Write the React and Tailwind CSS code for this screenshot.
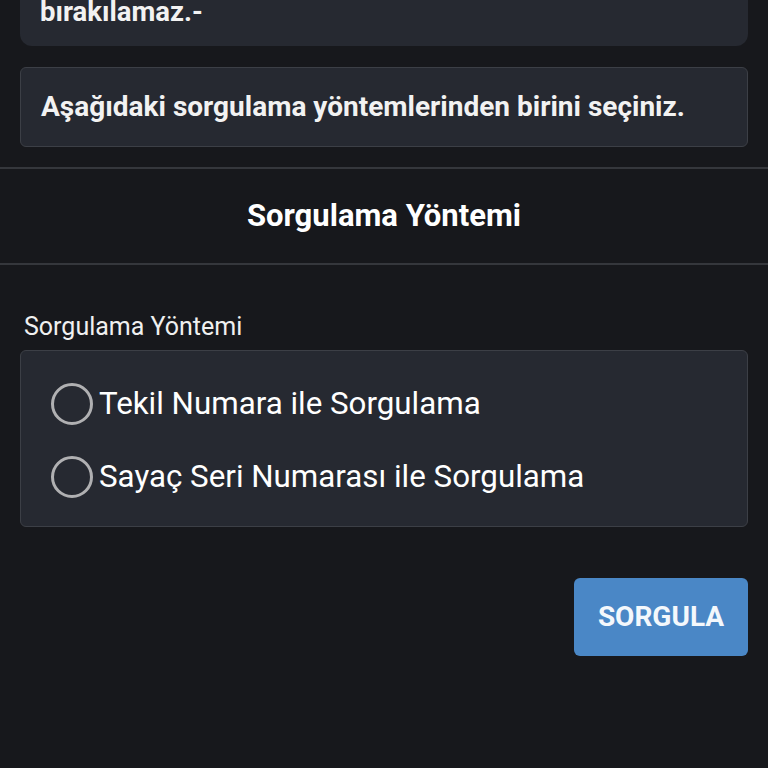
import React from 'react';

const options = ['Tekil Numara ile Sorgulama', 'Sayaç Seri Numarası ile Sorgulama'];

export default function App() {
  return (
    <div
      className="w-[768px] h-[768px] overflow-hidden bg-[#17181c] text-white"
      style={{ fontFamily: 'Roboto, "Noto Sans", sans-serif' }}
    >
      <div className="px-5">
        <div className="-mt-[60px] h-[106px] rounded-xl bg-[#262931] px-5 flex items-end pb-[17px]">
          <p className="text-[27.5px] font-bold leading-[34px] text-[#f2f2f2]">bırakılamaz.-</p>
        </div>
        <div className="mt-[21px] h-[80px] rounded-md border border-[#3c3f46] bg-[#262931] px-5 flex items-center">
          <p className="text-[28px] font-bold text-[#f2f2f2]">
            Aşağıdaki sorgulama yöntemlerinden birini seçiniz.
          </p>
        </div>
      </div>

      <div className="mt-[20px] border-t-2 border-b-2 border-[#35373c] h-[98px] flex items-center justify-center">
        <h2 className="text-[31px] font-bold text-white">Sorgulama Yöntemi</h2>
      </div>

      <div className="px-5 pt-[47px]">
        <label className="block pl-1 text-[25px] leading-[30px] text-[#f0f0f0]">Sorgulama Yöntemi</label>
        <div className="mt-[8px] h-[177px] rounded-md border border-[#3c3f46] bg-[#262931] px-[30px] pt-[32px] flex flex-col gap-[31px]">
          {options.map((opt) => (
            <div key={opt} className="flex items-center gap-[6px]">
              <span className="w-[42px] h-[42px] rounded-full border-[3px] border-[#b0b0b2] shrink-0" />
              <span className="text-[31.3px] leading-[42px] text-white">{opt}</span>
            </div>
          ))}
        </div>
        <div className="mt-[51px] flex justify-end">
          <button className="w-[174px] h-[78px] rounded-md bg-[#4a87c6] text-[28px] font-bold text-[#f4f8fc]">
            SORGULA
          </button>
        </div>
      </div>
    </div>
  );
}
